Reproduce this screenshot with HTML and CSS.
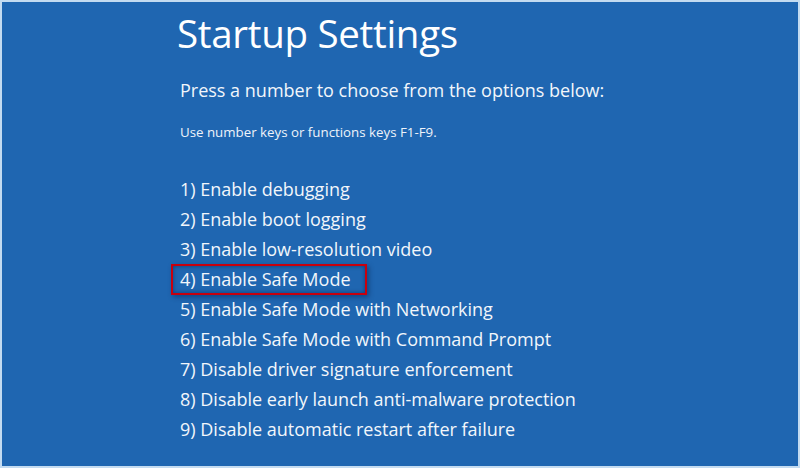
FILE: index.html
```html
<!DOCTYPE html>
<html>
<head>
<meta charset="utf-8">
<link rel="stylesheet" href="styles.css">
</head>
<body>
<div class="screen">
  <div class="content">
    <h1 class="title">Startup Settings</h1>
    <p class="lead">Press a number to choose from the options below:</p>
    <p class="hint">Use number keys or functions keys F1-F9.</p>
    <ul class="options">
      <li class="opt">1) Enable debugging</li>
      <li class="opt">2) Enable boot logging</li>
      <li class="opt">3) Enable low-resolution video</li>
      <li class="opt selected"><span class="mark">4) Enable Safe Mode</span></li>
      <li class="opt">5) Enable Safe Mode with Networking</li>
      <li class="opt">6) Enable Safe Mode with Command Prompt</li>
      <li class="opt">7) Disable driver signature enforcement</li>
      <li class="opt">8) Disable early launch anti-malware protection</li>
      <li class="opt">9) Disable automatic restart after failure</li>
    </ul>
  </div>
</div>
</body>
</html>
```

FILE: styles.css
```css
html, body {
  margin: 0;
  padding: 0;
}
body {
  width: 800px;
  height: 468px;
  overflow: hidden;
  background: #c3dbf1;
}
.screen {
  box-sizing: border-box;
  margin: 2px;
  width: 796px;
  height: 464px;
  background: #1f66b1;
  color: #ffffff;
  font-family: "Open Sans", "Noto Sans", sans-serif;
}
.content {
  display: flex;
  flex-direction: column;
  padding-left: 175px;
  padding-top: 5px;
}
.title {
  margin: 0;
  font-weight: 400;
  font-size: 38.5px;
  line-height: 52px;
  letter-spacing: -0.3px;
}
.lead {
  margin: 19px 0 0 3px;
  font-size: 18px;
  line-height: 24px;
  color: #f2f6fb;
}
.hint {
  margin: 21px 0 0 3px;
  font-size: 13.3px;
  line-height: 19px;
  color: #eef3fa;
}
.options {
  list-style: none;
  margin: 32px 0 0 3px;
  padding: 0;
  display: flex;
  flex-direction: column;
}
.opt {
  font-size: 18px;
  line-height: 30px;
  height: 30px;
  color: #f2f6fb;
}
.selected {
  position: relative;
}
.mark {
  display: inline-block;
  box-sizing: border-box;
  height: 31px;
  margin-left: -9px;
  margin-top: -1px;
  padding: 0 14px 0 7px;
  border: 2px solid #c8000e;
  line-height: 27px;
  box-shadow: inset 0 0 4px rgba(0, 20, 60, 0.5), 2px 2px 5px rgba(0, 20, 60, 0.4);
}
```
